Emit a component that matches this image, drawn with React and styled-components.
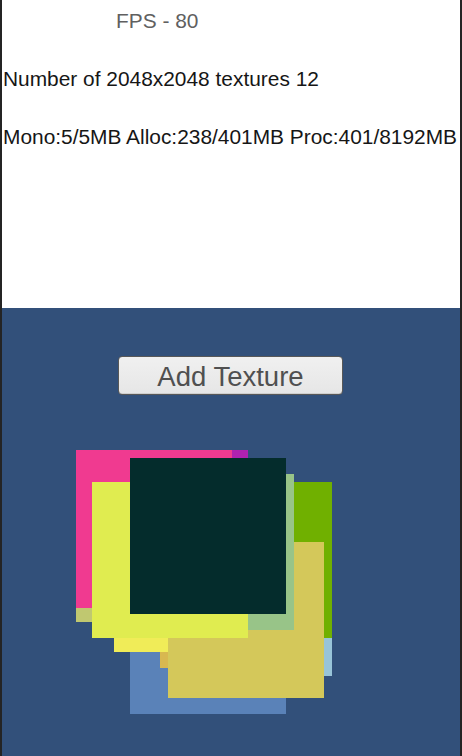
import styled, { createGlobalStyle } from "styled-components";

const GlobalStyle = createGlobalStyle`
  html, body {
    margin: 0;
    padding: 0;
    background: #ffffff;
  }
  * {
    box-sizing: border-box;
  }
`;

// drawn back to front
const textures = [
  { x: 0, y: 16, h: 156, color: "#c0c870" },
  { x: 16, y: 0, h: 156, color: "#b022b0" },
  { x: 0, y: 0, h: 158, color: "#f03a90" },
  { x: 100, y: 70, h: 156, color: "#98c4d8" },
  { x: 54, y: 108, h: 156, color: "#5a82b8" },
  { x: 84, y: 62, h: 156, color: "#d8b850" },
  { x: 100, y: 32, h: 156, color: "#70b000" },
  { x: 38, y: 46, h: 156, color: "#f0ec58" },
  { x: 92, y: 92, h: 156, color: "#d4c85a" },
  { x: 62, y: 24, h: 156, color: "#98c488" },
  { x: 16, y: 32, h: 156, color: "#e0ec50" },
  { x: 54, y: 8, h: 156, color: "#042c2c" },
];

export default function App() {
  return (
    <>
      <GlobalStyle />
      <Screen>
        <Stats>
          <StatLine $indent={113} $muted>FPS - 80</StatLine>
          <StatLine>Number of 2048x2048 textures 12</StatLine>
          <StatLine>Mono:5/5MB Alloc:238/401MB Proc:401/8192MB</StatLine>
        </Stats>

        <Scene>
          <AddButton>Add Texture</AddButton>
          <Canvas>
            {textures.map((t, i) => (
              <Texture key={i} $x={t.x} $y={t.y} $h={t.h} $color={t.color} />
            ))}
          </Canvas>
        </Scene>
      </Screen>
    </>
  );
}

const Screen = styled.div`
  width: 462px;
  height: 756px;
  display: flex;
  flex-direction: column;
  border-left: 2px solid #242424;
  border-right: 2px solid #242424;
  overflow: hidden;
  font-family: "Liberation Sans", Arial, sans-serif;
`;

const Stats = styled.div`
  height: 308px;
  background: #ffffff;
  padding: 9px 0 0 1px;
  display: flex;
  flex-direction: column;
  gap: 34px;
`;

const StatLine = styled.div`
  font-size: 20.9px;
  line-height: 24px;
  white-space: nowrap;
  padding-left: ${props => props.$indent || 0}px;
  color: ${props => props.$muted ? '#606060' : '#161616'};
`;

const Scene = styled.div`
  flex: 1;
  background: #32507a;
  display: flex;
  flex-direction: column;
  align-items: flex-start;
  padding-top: 48px;
`;

const AddButton = styled.button`
  margin-left: 116px;
  width: 225px;
  height: 39px;
  padding: 2px 0 0 0;
  border: 1px solid #585858;
  border-radius: 4px;
  background: linear-gradient(#f0f0f0, #e6e6e6);
  box-shadow: inset 0 -1px 0 #cfcfcf;
  font-family: "Liberation Sans", Arial, sans-serif;
  font-size: 27.5px;
  line-height: 34px;
  color: #505050;
`;

const Canvas = styled.div`
  position: relative;
  margin-top: 55px;
  margin-left: 74px;
  width: 256px;
  height: 264px;
`;

const Texture = styled.div`
  position: absolute;
  left: ${props => props.$x}px;
  top: ${props => props.$y}px;
  width: 156px;
  height: ${props => props.$h}px;
  background: ${props => props.$color};
`;
